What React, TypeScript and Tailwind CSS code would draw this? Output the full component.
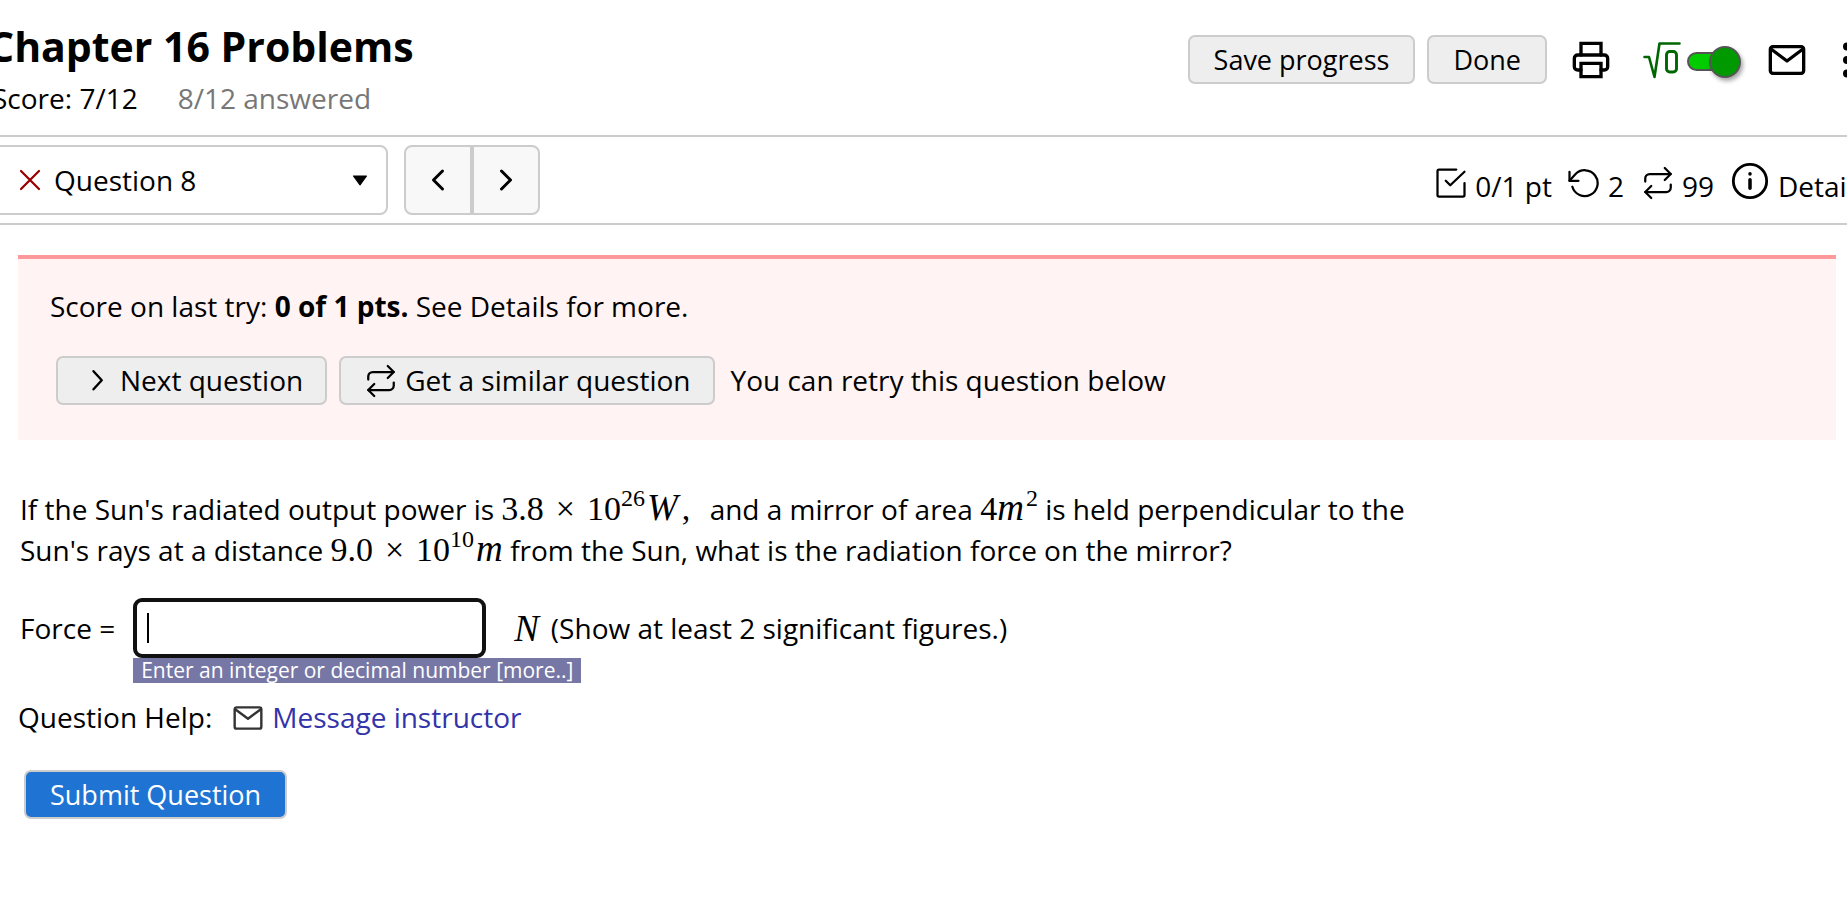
import { useState } from "react";
import type { ReactNode } from "react";

type IconProps = { className?: string; weight?: number; children: ReactNode };

function Icon({ className = "size-9", weight = 1.5, children }: IconProps) {
  return (
    <svg
      viewBox="0 0 24 24"
      className={`shrink-0 ${className}`}
      fill="none"
      stroke="currentColor"
      strokeWidth={weight}
      strokeLinecap="round"
      strokeLinejoin="round"
      aria-hidden="true"
    >
      {children}
    </svg>
  );
}

const PrinterIcon = () => (
  <Icon className="size-10" weight={2}>
    <path d="M6 9V2h12v7" strokeLinejoin="miter" />
    <path d="M6 18H4a2 2 0 0 1-2-2v-5a2 2 0 0 1 2-2h16a2 2 0 0 1 2 2v5a2 2 0 0 1-2 2h-2" />
    <path d="M6 14h12v8H6z" strokeLinejoin="miter" />
  </Icon>
);

const MailIcon = ({ className, weight = 2 }: { className: string; weight?: number }) => (
  <Icon className={className} weight={weight}>
    <rect x="2" y="4" width="20" height="16" rx="1.5" />
    <path d="M2.4 5.4 12 12.6l9.6-7.2" />
  </Icon>
);

const RepeatIcon = () => (
  <Icon>
    <path d="M16.5 2l4 4-4 4" />
    <path d="M3.5 11V9a3 3 0 0 1 3-3h14" />
    <path d="M7.5 22l-4-4 4-4" />
    <path d="M20.5 13v2a3 3 0 0 1-3 3h-14" />
  </Icon>
);

const RootIcon = () => (
  <svg viewBox="0 0 38 38" className="h-[38px] w-[38px] shrink-0 text-[#006600]" fill="none" stroke="currentColor" strokeLinecap="round" strokeLinejoin="round" aria-hidden="true">
    <path d="M1.5 16H6l5.500 20L16.500 2.500H36.500" strokeWidth="2.600" />
    <rect x="23.500" y="10.500" width="10" height="20.500" rx="3.200" strokeWidth="2.900" />
  </svg>
);

const greyButton =
  "flex h-[49px] cursor-pointer items-center rounded-[7px] border-2 border-[#cccccc] bg-[#eeeeee]";
const math = "font-['Liberation_Serif',serif] text-[34px] leading-none";
const variable = "text-[37px]";
const sup = "top-[-14px] text-[24px]";

export default function App() {
  const [answer, setAnswer] = useState("");
  const [mathOn, setMathOn] = useState(true);

  return (
    <div className="w-full overflow-hidden bg-white font-['Open_Sans',sans-serif] text-[28px] leading-[41px] whitespace-nowrap text-black">
      <header className="flex items-start justify-between border-b-2 border-[#cccccc] pt-[23px] pb-4">
        <div className="-ml-3">
          <h1 className="text-[41px] leading-[47px] font-bold">Chapter 16 Problems</h1>
          <p className="mt-2 ml-1 flex gap-10">
            <span>Score: 7/12</span>
            <span className="text-[#777777]">8/12 answered</span>
          </p>
        </div>
        <div className="mt-3 -mr-5 flex items-center">
          <div className="flex gap-3">
            <button type="button" className={`${greyButton} px-6 text-[27px]`}>Save progress</button>
            <button type="button" className={`${greyButton} px-6 text-[27px]`}>Done</button>
          </div>
          <button type="button" aria-label="Print" className="ml-6 cursor-pointer">
            <PrinterIcon />
          </button>
          <label className="ml-8 flex cursor-pointer items-center gap-1.5">
            <RootIcon />
            <input
              type="checkbox"
              role="switch"
              aria-label="Math display"
              className="peer sr-only"
              checked={mathOn}
              onChange={(e) => setMathOn(e.target.checked)}
            />
            <span className="mt-1 flex h-8 w-[54px] items-center">
              <span className="h-[19px] w-9 shrink-0 rounded-full border-2 border-[#555555] bg-[#00cc00]" />
              <span className="-ml-[14px] size-8 shrink-0 rounded-full border-2 border-[#555555] bg-[#009900] shadow-[2px_3px_4px_rgba(0,0,0,0.35)]" />
            </span>
          </label>
          <button type="button" aria-label="Messages" className="ml-[26px] cursor-pointer">
            <MailIcon className="size-10" />
          </button>
          <button type="button" aria-label="More options" className="ml-5 cursor-pointer">
            <svg viewBox="0 0 40 40" className="size-10" fill="currentColor" aria-hidden="true">
              <circle cx="20" cy="6.500" r="4" />
              <circle cx="20" cy="20" r="4" />
              <circle cx="20" cy="33.500" r="4" />
            </svg>
          </button>
        </div>
      </header>

      <nav className="flex items-center justify-between border-b-2 border-[#cccccc] py-2">
        <div className="flex gap-4">
          <div className="relative -ml-2">
            <select
              aria-label="Question"
              className="h-[70px] w-[396px] cursor-pointer appearance-none rounded-lg border-2 border-[#cccccc] bg-white pl-[60px]"
            >
              <option>Question 8</option>
            </select>
            <span className="pointer-events-none absolute inset-y-0 left-5 flex items-center text-[#990000]">
              <Icon>
                <path d="M18 6 6 18M6 6l12 12" />
              </Icon>
            </span>
            <span className="pointer-events-none absolute inset-y-0 right-5 flex items-center">
              <svg viewBox="0 0 16 11" className="h-[11px] w-4" aria-hidden="true">
                <path d="M1.500 1h13L8 9.800z" fill="#000" stroke="#000" strokeWidth="1.200" strokeLinejoin="round" />
              </svg>
            </span>
          </div>
          <div className="flex">
            <button type="button" aria-label="Previous question" className="flex h-[70px] w-[68px] cursor-pointer items-center justify-center rounded-l-lg border-2 border-[#cccccc] bg-[#f8f8f8]">
              <Icon weight={2}>
                <path d="M15 18l-6-6 6-6" />
              </Icon>
            </button>
            <button type="button" aria-label="Following question" className="flex h-[70px] w-[68px] cursor-pointer items-center justify-center rounded-r-lg border-2 border-[#cccccc] bg-[#f8f8f8]">
              <Icon weight={2}>
                <path d="M9 18l6-6-6-6" />
              </Icon>
            </button>
          </div>
        </div>
        <div className="-mr-5 flex items-end gap-4 pt-2">
          <span className="flex items-end gap-1.5">
            <Icon className="mb-1.5 size-9">
              <path d="M8.500 10.500l3 3L21 4.500" />
              <path d="M21 12v8a1 1 0 0 1-1 1H4a1 1 0 0 1-1-1V4a1 1 0 0 1 1-1h11.500" />
            </Icon>
            0/1 pt
          </span>
          <span className="flex items-end gap-1">
            <Icon className="mb-1.5 size-9">
              <path d="M1 4.500v6h6" />
              <path d="M2.900 14.500a8.600 8.600 0 1 0 2-8.300L1 10.500" />
            </Icon>
            2
          </span>
          <span className="flex items-end gap-1.5">
            <span className="mb-1.5">
              <RepeatIcon />
            </span>
            99
          </span>
          <button type="button" className="flex cursor-pointer items-end gap-2">
            <Icon className="mb-1.5 size-10" weight={1.7}>
              <circle cx="12" cy="12" r="10" />
              <path d="M12 11.300v5M12 7.700v.1" strokeWidth="2.100" />
            </Icon>
            Details
          </button>
        </div>
      </nav>

      <main>
        <section className="mt-[30px] mr-[11px] ml-[18px] border-t-4 border-[#ff9999] bg-[#fff3f3] px-8 pt-[27px] pb-[35px]">
          <p>
            Score on last try: <b>0 of 1 pts.</b> See Details for more.
          </p>
          <div className="mt-[29px] ml-1.5 flex items-center gap-3">
            <button type="button" className={`${greyButton} gap-1 px-[22px]`}>
              <Icon weight={1.6}>
                <path d="M9 17.500l5.500-6L9 5.500" />
              </Icon>
              Next question
            </button>
            <button type="button" className={`${greyButton} gap-1.5 px-[22px]`}>
              <RepeatIcon />
              Get a similar question
            </button>
            <span className="ml-1">You can retry this question below</span>
          </div>
        </section>

        <p className="mx-5 mt-[49px] max-w-[1410px] whitespace-normal">
          If the Sun's radiated output power is{" "}
          <span className={`${math} whitespace-nowrap`}>
            3.8<span className="mx-3">×</span>10<sup className={sup}>26</sup>
            <i className={`ml-0.5 ${variable}`}>W</i>
            <span className="ml-1">,</span>
          </span>
          <span className="ml-3"> and a mirror of area </span>
          <span className={math}>
            4<i className={variable}>m</i>
            <sup className={`ml-0.5 ${sup}`}>2</sup>
          </span>{" "}
          is held perpendicular to the Sun's rays at a distance{" "}
          <span className={`${math} whitespace-nowrap`}>
            9.0<span className="mx-3">×</span>10<sup className={sup}>10</sup>
            <i className={`ml-0.5 ${variable}`}>m</i>
          </span>{" "}
          from the Sun, what is the radiation force on the mirror?
        </p>

        <div className="mt-[27px] ml-5 flex items-center">
          <label htmlFor="force">Force =</label>
          <div className="relative ml-[18px] h-[60px]">
            <input
              id="force"
              type="text"
              autoComplete="off"
              aria-describedby="force-tip"
              value={answer}
              onChange={(e) => setAnswer(e.target.value)}
              className="h-[60px] w-[353px] rounded-[9px] border-4 border-[#111111] bg-white px-3 caret-transparent outline-none"
            />
            {answer === "" && <span className="pointer-events-none absolute top-[15px] left-[14px] h-[30px] w-0.5 bg-black" />}
            <span id="force-tip" className="absolute top-full left-0 h-[25px] bg-[#7777a5] px-2 text-[21px] leading-[24px] font-medium text-white">
              Enter an integer or decimal number [more..]
            </span>
          </div>
          <span className={`ml-7 ${math}`}>
            <i className={variable}>N</i>
          </span>
          <span className="ml-3">(Show at least 2 significant figures.)</span>
        </div>

        <div className="mt-[39px] ml-[18px] flex items-center">
          <span>Question Help:</span>
          <a href="#message" className="ml-5 flex items-center gap-2 text-[#3333aa]">
            <span className="text-[#333333]">
              <MailIcon className="size-8" weight={1.8} />
            </span>
            Message instructor
          </a>
        </div>

        <button type="button" className="mt-8 ml-6 h-[49px] cursor-pointer rounded-[7px] border-2 border-[#cccccc] bg-[#1f74d3] px-6 text-[27px] font-medium text-white">
          Submit Question
        </button>
      </main>
    </div>
  );
}
